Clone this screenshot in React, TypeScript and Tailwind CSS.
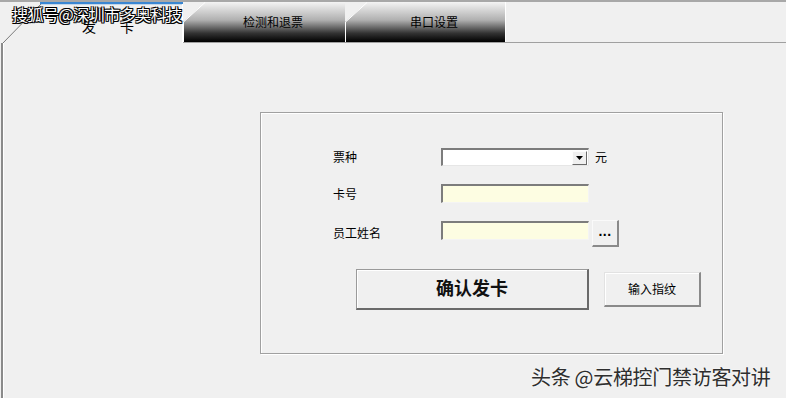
import React from 'react';

const cjk = '[font-family:"Noto_Sans_CJK_SC","Noto_Sans",sans-serif]';

function GradientTab({ width, label, id }: { width: number; label: string; id: string }) {
  return (
    <div className="relative h-[40px] shrink-0" style={{ width }}>
      <svg className="absolute inset-0" width={width} height={40} viewBox={`0 0 ${width} 40`}>
        <defs>
          <linearGradient id={id} x1="0" y1="0" x2="0" y2="1">
            <stop offset="0" stopColor="#f4f4f4" />
            <stop offset="0.45" stopColor="#b0b0b0" />
            <stop offset="0.78" stopColor="#333" />
            <stop offset="1" stopColor="#000" />
          </linearGradient>
        </defs>
        <polygon points={`0,40 0,20 22,0 ${width},0 ${width},40`} fill={`url(#${id})`} />
        <polyline points="0.5,40 0.5,20 22,0.5" fill="none" stroke="#fff" strokeWidth="1" />
      </svg>
      <span className={`relative flex h-full items-start justify-center pt-[12px] pl-[18px] text-[12px] leading-[16px] text-black ${cjk}`}>
        {label}
      </span>
    </div>
  );
}

function ActiveTab() {
  return (
    <div className="relative h-[41px] w-[183px] shrink-0 bg-[#f0f0f0]">
      <svg className="absolute inset-0" width={183} height={41} viewBox="0 0 183 41">
        <line x1="3" y1="41" x2="42" y2="1" stroke="#7a7a7a" strokeWidth="1" />
        <line x1="40" y1="1" x2="183" y2="1" stroke="#3a86d2" strokeWidth="2.5" />
        <line x1="182.5" y1="2" x2="182.5" y2="41" stroke="#ffffff" strokeWidth="1" />
      </svg>
      <div className={`relative flex gap-[24px] pl-[82px] pt-[15px] text-[14px] leading-[18px] text-black ${cjk}`}>
        <span>发</span>
        <span>卡</span>
      </div>
    </div>
  );
}

export default function App() {
  return (
    <div className={`relative h-[398px] w-[786px] overflow-hidden bg-[#f0f0f0] ${cjk}`}>
      <div className="h-[2px] bg-[#a8a8a8]" />
      <div className="flex h-[40px] items-start">
        <ActiveTab />
        <GradientTab width={162} label="检测和退票" id="g1" />
        <GradientTab width={160} label="串口设置" id="g2" />
        <div className="h-[40px] w-px bg-white" />
      </div>
      <div className="flex h-px">
        <div className="w-[183px]" />
        <div className="flex-1 bg-[#a0a0a0]" />
      </div>

      <div className="ml-px h-[360px] border-l-2 border-[#8a8a8a]">
        <div className="h-full border-l border-white pl-[256px] pt-[69px]">
          <div className="h-[242px] w-[463px] border border-[#a0a0a0] shadow-[inset_1px_1px_0_#fff,1px_1px_0_#fff]">
            <div className="flex flex-col pl-[72px] pt-[35px] text-[12px] leading-[16px] text-black">
              <div className="flex h-[18px] items-center">
                <span className="w-[108px]">票种</span>
                <div className="relative h-[18px] w-[148px] border-t-2 border-l-2 border-[#7c7c7c] border-r border-b border-r-[#e6e6e6] border-b-[#e6e6e6] bg-white">
                  <div className="absolute right-px top-px flex h-[14px] w-[15px] items-center justify-center border border-[#fdfdfd] border-r-[#6a6a6a] border-b-[#6a6a6a] bg-[#f0f0f0]">
                    <svg width="7" height="4" viewBox="0 0 7 4">
                      <polygon points="0,0 7,0 3.5,4" fill="#000" />
                    </svg>
                  </div>
                </div>
                <span className="ml-[6px]">元</span>
              </div>

              <div className="mt-[18px] flex h-[19px] items-center">
                <span className="w-[108px]">卡号</span>
                <div className="h-[19px] w-[148px] border-t-2 border-l-2 border-[#7c7c7c] border-r border-b border-r-[#f4f4f4] border-b-[#f4f4f4] bg-[#fdfde2]" />
              </div>

              <div className="mt-[17px] flex h-[27px] items-start">
                <span className="mt-[5px] w-[108px]">员工姓名</span>
                <div className="mt-px h-[19px] w-[148px] border-t-2 border-l-2 border-[#7c7c7c] border-r border-b border-r-[#f4f4f4] border-b-[#f4f4f4] bg-[#fdfde2]" />
                <div className="ml-[3px] flex h-[27px] w-[27px] items-center justify-center border border-[#fafafa] border-r-2 border-b-2 border-r-[#8a8a8a] border-b-[#8a8a8a] bg-[#f0f0f0] pb-[5px] text-[14px] font-bold leading-none tracking-[0.5px] [font-family:'Liberation_Sans',sans-serif]">
                  ...
                </div>
              </div>

              <div className="mt-[22px] flex items-center pl-[23px]">
                <div className="flex h-[41px] w-[233px] items-center justify-center border border-[#9a9a9a] border-r-2 border-b-2 border-r-[#6a6a6a] border-b-[#6a6a6a] bg-[#f0f0f0] shadow-[inset_1px_1px_0_#fff] text-[18px] font-bold leading-none text-[#111] [font-family:'Liberation_Serif','Noto_Sans_CJK_SC',serif]">
                  确认发卡
                </div>
                <div className="ml-[15px] flex h-[35px] w-[97px] items-center justify-center border border-[#e2e2e2] border-r-2 border-b-2 border-r-[#8a8a8a] border-b-[#8a8a8a] bg-[#f0f0f0] shadow-[inset_1px_1px_0_#fff] text-[12px] leading-none">
                  输入指纹
                </div>
              </div>
            </div>
          </div>
        </div>
      </div>

      <div className="absolute left-[12px] top-[3px] text-[16px] leading-[22px] tracking-[-0.5px] text-white [text-shadow:1px_1px_0_#000,-1px_-1px_0_#000,1px_-1px_0_#000,-1px_1px_0_#000,0_1px_0_#000,1px_0_0_#000]">
        搜狐号@深圳市多奥科技
      </div>
      <div className="absolute left-[531px] top-[364px] text-[20px] leading-[26px] tracking-[-0.3px] text-[#2e2e2e] [text-shadow:0_0_2px_#fff]">
        头条 @云梯控门禁访客对讲
      </div>
    </div>
  );
}
